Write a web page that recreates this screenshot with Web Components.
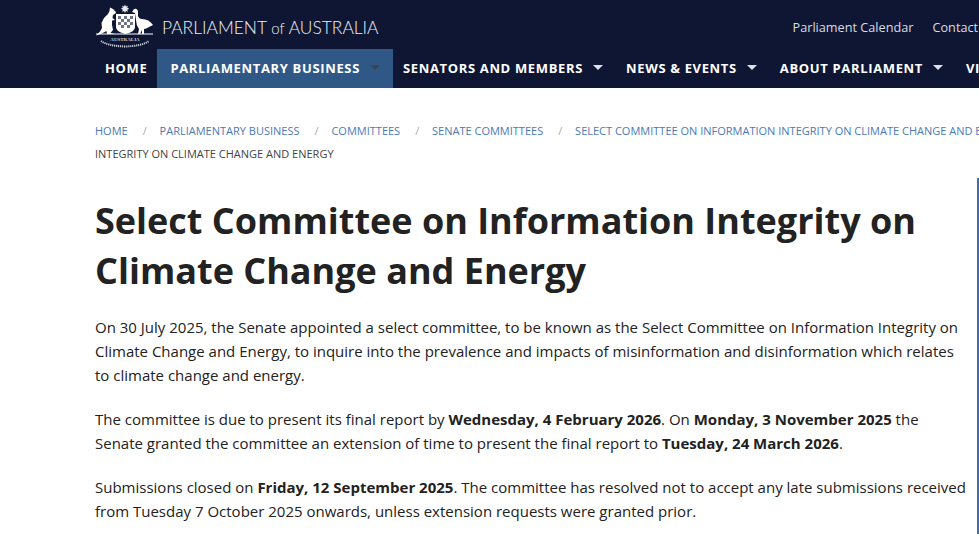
<!DOCTYPE html>
<html lang="en">
<head>
<meta charset="utf-8">
<title>Select Committee on Information Integrity on Climate Change and Energy</title>
<style>
    html, body {
        margin: 0;
        height: 100%;
        overflow: hidden;
        background: #fff;
        font-family: "Open Sans", sans-serif;
    }
</style>
</head>
<body>
<site-page>
    <site-header></site-header>
    <bread-crumbs>
        <a href="#">Home</a>
        <a href="#">Parliamentary Business</a>
        <a href="#">Committees</a>
        <a href="#">Senate Committees</a>
        <a href="#">Select Committee on Information Integrity on Climate Change and Energy</a>
        <span>Select Committee on Information Integrity on Climate Change and Energy</span>
    </bread-crumbs>
    <committee-article>
        <h1 slot="title">Select Committee on Information Integrity on Climate Change and Energy</h1>
        <p>On 30 July 2025, the Senate appointed a select committee, to be known as the Select Committee on Information Integrity on Climate Change and Energy, to inquire into the prevalence and impacts of misinformation and disinformation which relates to climate change and energy.</p>
        <p>The committee is due to present its final report by <b>Wednesday, 4 February 2026</b>. On <b>Monday, 3 November 2025</b> the Senate granted the committee an extension of time to present the final report to <b>Tuesday, 24 March 2026</b>.</p>
        <p>Submissions closed on <b>Friday, 12 September 2025</b>. The committee has resolved not to accept any late submissions received from Tuesday 7 October 2025 onwards, unless extension requests were granted prior.</p>
    </committee-article>
</site-page>

<script>
class SitePage extends HTMLElement {
    connectedCallback() {
        this.attachShadow({mode: 'open'}).innerHTML = `
            <style>
                :host {
                    display: block;
                    width: 1400px;
                }
            </style>
            <slot></slot>
        `;
    }
}

class CrestLogo extends HTMLElement {
    connectedCallback() {
        this.attachShadow({mode: 'open'}).innerHTML = `
            <style>
                :host {
                    display: flex;
                    align-items: center;
                    color: #f0f1f4;
                }
                svg {
                    display: block;
                    width: 58px;
                    height: 48px;
                }
                text {
                    font-family: "Liberation Serif", serif;
                    font-size: 5px;
                    font-weight: bold;
                    fill: #c9ccd4;
                }
                .name {
                    margin-left: 8px;
                    padding-top: 6px;
                    font-family: "Lato", sans-serif;
                    font-weight: 300;
                    font-size: 17.4px;
                    white-space: nowrap;
                }
                .name small {
                    font-size: 15px;
                }
            </style>
            <svg viewBox="0 0 58 48" fill="#fff">
                <path d="M29 4.500l1 2 2-.8-.8 2 2 1-2 1 .8 2-2-.8-1 2-1-2-2 .8.800-2-2-1 2-1-.8-2 2 .8z" fill="#e4e6ea"/>
                <path d="M20 14h19v13q0 5-9.500 7-9.500-2-9.500-7z"/>
                <path d="M22 16h3v3h-3zM28 16h3v3h-3zM34 16h3v3h-3zM25 19h3v3h-3zM31 19h3v3h-3zM22 22h3v3h-3zM28 22h3v3h-3zM34 22h3v3h-3zM25 25h3v3h-3zM31 25h3v3h-3z" fill="#0e1633" opacity=".6"/>
                <path d="M17 9L19.500 11.500 20 13 17 15 16.500 18 19 20 16 20.500 16 25 17 30 14.500 33 19 34H11L10.500 31 6 33.500 0 35.500 4 31.500 6 28 5.500 23 8 18 12 14 13.500 11 14 7.500z"/>
                <path d="M38 9Q41 8 42 11L42 16Q43 19 46 19 53 19 57 25L53 27Q50 29 48 29L48 34H46L46 30 44 34H42L43 29Q40 25 40 20L39 13 36 12Z"/>
                <rect x="0" y="33.500" width="57" height="1"/>
                <path d="M5 41Q12 46 29 46.500 46 46 53 41" fill="none" stroke="#c9ccd4" stroke-width="2" stroke-dasharray="1.200 .8"/>
                <text x="29" y="41" text-anchor="middle">AUSTRALIA</text>
            </svg>
            <span class="name">PARLIAMENT <small>of</small> AUSTRALIA</span>
        `;
    }
}

class NavItem extends HTMLElement {
    connectedCallback() {
        this.attachShadow({mode: 'open'}).innerHTML = `
            <style>
                :host {
                    display: flex;
                    align-items: center;
                    gap: 10px;
                    height: 39px;
                    padding: 0 13px 2px 10px;
                    box-sizing: border-box;
                    color: #fff;
                    font-size: 13px;
                    font-weight: 700;
                    letter-spacing: 0.65px;
                    white-space: nowrap;
                }
                :host(:not([menu])) {
                    padding-right: 10px;
                }
                :host([active]) {
                    background: #305887;
                    padding-left: 13px;
                }
                i {
                    display: none;
                    width: 0;
                    height: 0;
                    border: 5.5px solid transparent;
                    border-top-color: #dfe1e6;
                    border-bottom-width: 0;
                }
                :host([menu]) i {
                    display: block;
                }
                :host([active]) i {
                    border-top-color: #3d4450;
                }
            </style>
            <slot></slot><i></i>
        `;
    }
}

class SiteHeader extends HTMLElement {
    connectedCallback() {
        this.attachShadow({mode: 'open'}).innerHTML = `
            <style>
                :host {
                    display: block;
                    height: 88px;
                    background: #0e1633;
                }
                .top {
                    display: flex;
                    height: 49px;
                    align-items: flex-start;
                    padding-left: 96px;
                }
                .links {
                    display: flex;
                    gap: 19px;
                    margin-left: 414px;
                    padding-top: 19px;
                    color: #d9dce3;
                    font-size: 12.7px;
                    line-height: 17px;
                    white-space: nowrap;
                }
                nav {
                    display: flex;
                    padding-left: 95px;
                }
            </style>
            <div class="top">
                <crest-logo></crest-logo>
                <div class="links">
                    <span>Parliament Calendar</span>
                    <span>Contact</span>
                </div>
            </div>
            <nav>
                <nav-item>HOME</nav-item>
                <nav-item active menu>PARLIAMENTARY BUSINESS</nav-item>
                <nav-item menu>SENATORS AND MEMBERS</nav-item>
                <nav-item menu>NEWS &amp; EVENTS</nav-item>
                <nav-item menu>ABOUT PARLIAMENT</nav-item>
                <nav-item>VISIT PARLIAMENT</nav-item>
            </nav>
        `;
    }
}

class BreadCrumbs extends HTMLElement {
    connectedCallback() {
        const root = this.attachShadow({mode: 'open'});
        const items = [...this.children].map((el, i, all) => {
            const text = el.textContent.toUpperCase();
            if (el.tagName === 'A') {
                return `<a href="#">${text}</a>` + (i < all.length - 1 ? '<em>/</em>' : '');
            }
            return `<span>${text}</span>`;
        }).join(' ');
        root.innerHTML = `
            <style>
                :host {
                    display: block;
                    width: 1185px;
                    padding: 31px 0 0 95px;
                    font-size: 11px;
                    line-height: 23px;
                    color: #444;
                }
                a {
                    color: #4a7ab5;
                    text-decoration: none;
                }
                em {
                    font-style: normal;
                    color: #aaa;
                    margin: 0 10px 0 15px;
                }
            </style>
            ${items}
        `;
    }
}

class CommitteeArticle extends HTMLElement {
    connectedCallback() {
        this.attachShadow({mode: 'open'}).innerHTML = `
            <style>
                :host {
                    display: grid;
                    grid-template-columns: 873px 1fr;
                    column-gap: 9px;
                    padding: 13px 0 0 95px;
                    color: #222;
                    font-size: 15px;
                    line-height: 24px;
                }
                ::slotted(h1) {
                    margin: 18px 0 19px;
                    font-size: 36px;
                    line-height: 50px;
                    font-weight: 700;
                    color: #222;
                }
                ::slotted(p) {
                    margin: 0 0 20px;
                }
                .side {
                    border-left: 2px solid #3f6fae;
                    min-height: 400px;
                }
            </style>
            <div class="main">
                <slot name="title"></slot>
                <slot></slot>
            </div>
            <div class="side"></div>
        `;
    }
}

try {
    customElements.define('site-page', SitePage);
    customElements.define('crest-logo', CrestLogo);
    customElements.define('nav-item', NavItem);
    customElements.define('site-header', SiteHeader);
    customElements.define('bread-crumbs', BreadCrumbs);
    customElements.define('committee-article', CommitteeArticle);
} catch (err) {
    const d = document.createElement('div');
    d.textContent = 'Could not define elements';
    document.body.appendChild(d);
}
</script>
</body>
</html>
